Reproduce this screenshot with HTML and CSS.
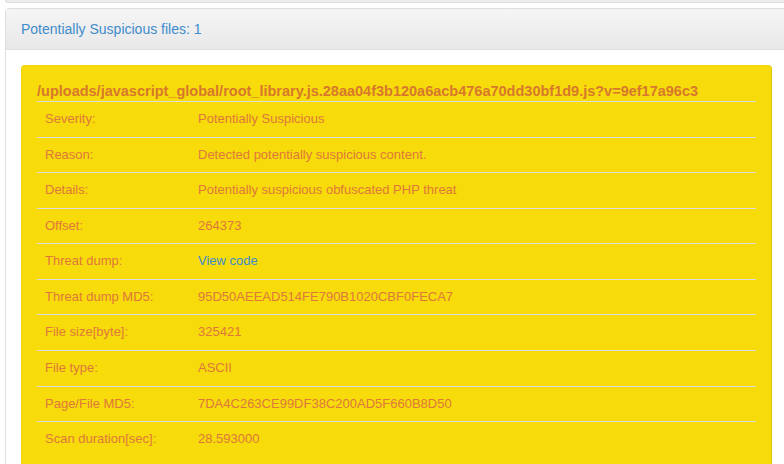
FILE: index.html
```html
<!DOCTYPE html>
<html>
<head>
<meta charset="utf-8">
<link rel="stylesheet" href="styles.css">
</head>
<body>
<div class="page">
  <div class="prev-panel"></div>
  <div class="panel">
    <div class="panel-heading">Potentially Suspicious files: 1</div>
    <div class="panel-body">
      <div class="alert">
        <div class="file-title">/uploads/javascript_global/root_library.js.28aa04f3b120a6acb476a70dd30bf1d9.js?v=9ef17a96c3</div>
        <table class="details">
          <tr><td class="label">Severity:</td><td>Potentially Suspicious</td></tr>
          <tr><td class="label">Reason:</td><td>Detected potentially suspicious content.</td></tr>
          <tr><td class="label">Details:</td><td>Potentially suspicious obfuscated PHP threat</td></tr>
          <tr><td class="label">Offset:</td><td>264373</td></tr>
          <tr><td class="label">Threat dump:</td><td><a class="link" href="#">View code</a></td></tr>
          <tr><td class="label">Threat dump MD5:</td><td>95D50AEEAD514FE790B1020CBF0FECA7</td></tr>
          <tr><td class="label">File size[byte]:</td><td>325421</td></tr>
          <tr><td class="label">File type:</td><td>ASCII</td></tr>
          <tr><td class="label">Page/File MD5:</td><td>7DA4C263CE99DF38C200AD5F660B8D50</td></tr>
          <tr><td class="label">Scan duration[sec]:</td><td>28.593000</td></tr>
        </table>
      </div>
    </div>
  </div>
</div>
</body>
</html>
```
FILE: styles.css
```css
html, body {
  margin: 0;
  padding: 0;
  overflow: hidden;
  background: #ffffff;
}
body {
  font-family: "Liberation Sans", Arial, sans-serif;
  font-size: 13px;
  line-height: 1.42857;
}
.page {
  width: 790px;
  padding-left: 5px;
}
.prev-panel {
  height: 2px;
  width: 781px;
  background: #eeeeee;
  border: 1px solid #dddddd;
  border-top: none;
  border-radius: 0 0 4px 4px;
  margin-bottom: 5px;
}
.panel {
  width: 781px;
  border: 1px solid #dddddd;
  border-radius: 4px;
  background: #ffffff;
}
.panel-heading {
  padding: 10px 15px;
  font-size: 14px;
  line-height: 20px;
  color: #3f8ccc;
  background: linear-gradient(to bottom, #f5f5f5 0%, #e8e8e8 100%);
  border-bottom: 1px solid #dddddd;
  border-radius: 3px 3px 0 0;
}
.panel-body {
  padding: 15px;
}
.alert {
  background: #f7db0a;
  border: 1px solid #f1d50a;
  border-right-color: #e3c90c;
  border-radius: 4px;
  padding: 15px 15px 20px 15px;
  color: #e0783c;
}
.file-title {
  font-weight: bold;
  font-size: 14.5px;
  line-height: 20px;
  color: #d7782c;
  border-bottom: 1px solid #dddddd;
  white-space: nowrap;
}
.details {
  width: 100%;
  border-collapse: collapse;
  border-spacing: 0;
}
.details td {
  padding: 8px;
  border-top: 1px solid #dddddd;
  vertical-align: top;
}
.details tr:first-child td {
  border-top: none;
}
.details td.label {
  width: 153px;
  box-sizing: border-box;
}
.link {
  color: #3f8ccc;
  text-decoration: none;
}
```
